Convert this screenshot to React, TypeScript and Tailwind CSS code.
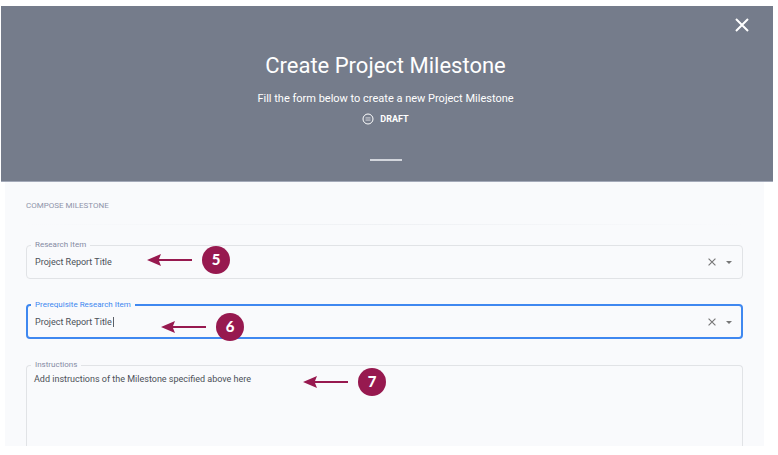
import { useState } from 'react';

function CloseIcon({ className }: { className: string }) {
  return (
    <svg viewBox="0 0 14 14" className={className} fill="none" stroke="currentColor" aria-hidden="true">
      <path d="M1 1 13 13M13 1 1 13" />
    </svg>
  );
}

function StepMarker({ step, className }: { step: number; className: string }) {
  return (
    <div className={`pointer-events-none absolute flex items-center gap-[10px] text-[#97194f] ${className}`}>
      <svg viewBox="0 0 46 14" className="h-[14px] w-[46px]" aria-hidden="true">
        <path d="M1 7 15 1 13 6H46V8H13L15 13Z" fill="currentColor" />
      </svg>
      <span className="flex size-7 items-center justify-center rounded-full bg-[#97194f] pb-px font-[Lato,sans-serif] text-[15px] font-black text-white">
        {step}
      </span>
    </div>
  );
}

function SelectField({
  id,
  label,
  focused = false,
  children,
}: {
  id: string;
  label: string;
  focused?: boolean;
  children: React.ReactNode;
}) {
  const [value, setValue] = useState('Project Report Title');

  return (
    <div className="relative">
      <fieldset
        className={`h-10 rounded ${focused ? 'border-2 border-[#3f88f0] px-[2px]' : 'border border-[#e1e3e6] px-[3px]'}`}
      >
        <legend
          className={`ml-px px-1 text-[8px] leading-3 ${focused ? 'text-[#3f88f0]' : 'text-[#858aa3]'}`}
        >
          <label htmlFor={id}>{label}</label>
        </legend>
        <div className="flex h-[22px] items-center pr-[7px] pl-[5px]">
          <input
            id={id}
            value={value}
            onChange={(e) => setValue(e.target.value)}
            className="min-w-0 flex-1 bg-transparent text-[9px] leading-4 text-[#4c5058] outline-none"
          />
          <button type="button" aria-label="Clear" onClick={() => setValue('')} className="text-[#777]">
            <CloseIcon className="size-2 stroke-2" />
          </button>
          <button type="button" aria-label="Open" className="ml-[10px] flex w-[6px] justify-center text-[#777]">
            <svg viewBox="0 0 6 3" className="h-[3px] w-[6px]" aria-hidden="true">
              <path d="M0 0h6L3 3z" fill="currentColor" />
            </svg>
          </button>
        </div>
      </fieldset>
      {children}
    </div>
  );
}

export default function App() {
  return (
    <div className="bg-white pt-[6px] pr-[5px] pb-[9px] pl-px font-[Roboto,sans-serif]">
      <header className="relative flex flex-col items-center border-b border-[#a3a9b8] bg-[#757c8b] pt-[45px] pr-[3px] pb-5 text-white">
        <button type="button" aria-label="Close" className="absolute top-3 right-6">
          <CloseIcon className="size-[14px] stroke-2" />
        </button>
        <h1 className="text-[22px] leading-[30px]">Create Project Milestone</h1>
        <p className="mt-3 text-[11px] leading-3">Fill the form below to create a new Project Milestone</p>
        <div className="mt-2 flex items-center gap-[6px] text-[9px] leading-3 font-bold">
          <svg viewBox="0 0 12 12" className="size-3" fill="none" stroke="currentColor" aria-hidden="true">
            <circle cx="6" cy="6" r="5" />
            <path d="M3.5 4.7h5M3.5 6h5M3.5 7.3h5" strokeWidth=".6" opacity=".8" />
          </svg>
          DRAFT
        </div>
        <div className="mt-[34px] h-[2px] w-8 bg-[#d2d5dc]" />
      </header>

      <main className="mr-[9px] ml-1 bg-[#f9fafc] px-[21px] pt-[18px]">
        <h2 className="text-[8px] leading-3 text-[#8f94aa]">COMPOSE MILESTONE</h2>
        <div className="mt-3 h-px bg-linear-to-r from-transparent via-[#eff1f4] to-transparent" />

        <form className="mt-[14px] flex flex-col gap-5">
          <SelectField id="research-item" label="Research Item">
            <StepMarker step={5} className="top-[7px] left-[120px]" />
          </SelectField>

          <SelectField id="prerequisite-item" label="Prerequisite Research Item" focused>
            <span className="absolute top-[18px] left-[87px] h-[10px] w-px bg-[#5c6068]" />
            <StepMarker step={6} className="top-[14px] left-[134px]" />
          </SelectField>

          <div className="relative">
            <fieldset className="rounded-t border border-b-0 border-[#e1e3e6] px-[3px]">
              <legend className="ml-px px-1 text-[8px] leading-3 text-[#858aa3]">
                <label htmlFor="instructions">Instructions</label>
              </legend>
              <textarea
                id="instructions"
                defaultValue="Add instructions of the Milestone specified above here"
                className="block h-[75px] w-full resize-none bg-transparent px-1 pt-[2px] text-[9px] leading-3 text-[#4c5058] outline-none"
              />
            </fieldset>
            <StepMarker step={7} className="top-[9px] left-[276px]" />
          </div>
        </form>
      </main>
    </div>
  );
}
